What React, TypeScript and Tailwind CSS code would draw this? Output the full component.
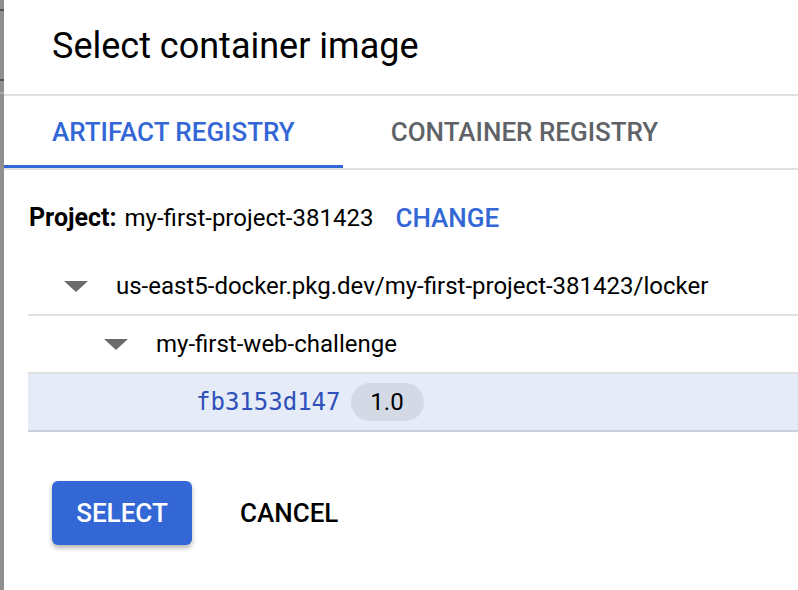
import React from "react";

function Caret() {
  return (
    <svg width="24" height="11" viewBox="0 0 24 11" className="shrink-0">
      <polygon points="0,0 24,0 12,11" fill="#6b6b6b" />
    </svg>
  );
}

export default function App() {
  return (
    <div
      className="w-[798px] h-[590px] flex bg-white overflow-hidden text-black"
      style={{ fontFamily: "Roboto, 'Noto Sans', sans-serif" }}
    >
      <div className="w-[4px] shrink-0 bg-[#8f8f8f] flex flex-col">
        <div className="h-[9px]" />
        <div className="h-[2px] bg-[#555555]" />
        <div className="h-[68px]" />
        <div className="h-[2px] bg-[#555555]" />
        <div className="h-[11px]" />
        <div className="h-[2px] bg-[#a8a8a8]" />
      </div>
      <div className="flex-1 flex flex-col min-w-0">
        <div className="h-[94px] pl-[48px] flex items-center">
          <h1 className="text-[36px] leading-none pb-[3px]">Select container image</h1>
        </div>
        <div className="h-[2px] bg-[#e0e0e0]" />
        <div className="flex border-b-[2px] border-[#e0e0e0]">
          <div className="h-[72px] px-[48px] flex items-center justify-center text-[26px] font-medium text-[#3367d6] border-b-[3px] border-[#3367d6] -mb-[2px] pt-[3px]">
            ARTIFACT REGISTRY
          </div>
          <div className="h-[72px] px-[48px] flex items-center justify-center text-[26px] font-medium text-[#5f6368]">
            CONTAINER REGISTRY
          </div>
        </div>
        <div className="pl-[25px] pt-[8px] flex items-center text-[24px] h-[88px]">
          <span className="font-bold text-[25px]">Project:</span>
          <span className="ml-[8px]">my-first-project-381423</span>
          <span className="ml-[22px] text-[#3367d6] font-medium text-[26px]">CHANGE</span>
        </div>
        <div className="ml-[24px]">
          <div className="h-[58px] flex items-center border-b-[2px] border-[#e0e0e0] pl-[36px] text-[24px]">
            <Caret />
            <span className="ml-[28px]">us-east5-docker.pkg.dev/my-first-project-381423/locker</span>
          </div>
          <div className="h-[58px] flex items-center border-b-[2px] border-[#e0e0e0] pl-[76px] text-[24px]">
            <Caret />
            <span className="ml-[28px]">my-first-web-challenge</span>
          </div>
          <div className="h-[58px] flex items-center bg-[#e5ebf7] border-b-[2px] border-[#c9cfdb] pl-[168px]">
            <span
              className="text-[24px] text-[#2f4fbb]"
              style={{ fontFamily: "'DejaVu Sans Mono', 'Liberation Mono', monospace" }}
            >
              fb3153d147
            </span>
            <span className="ml-[10px] h-[38px] w-[73px] rounded-full bg-[#d3d9e5] flex items-center justify-center text-[24px]">
              1.0
            </span>
          </div>
        </div>
        <div className="flex items-center pl-[48px] pt-[49px] gap-[48px]">
          <button className="w-[140px] h-[64px] rounded-[6px] bg-[#3367d6] text-white text-[26px] font-medium shadow-[0_3px_5px_rgba(0,0,0,0.3)]">
            SELECT
          </button>
          <span className="text-[26px] font-medium">CANCEL</span>
        </div>
      </div>
    </div>
  );
}
